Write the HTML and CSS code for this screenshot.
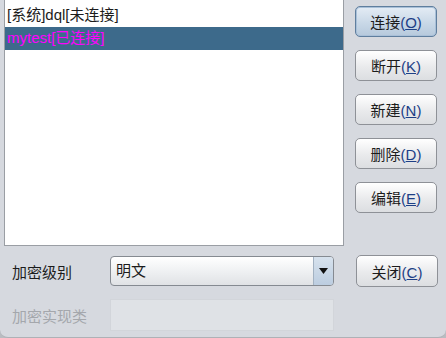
FILE: index.html
```html
<!DOCTYPE html>
<html lang="zh-CN">
<head>
    <meta charset="UTF-8">
    <title>连接管理</title>
    <link rel="stylesheet" href="styles.css">
</head>
<body>

    <div class="window">
        <div class="top">
            <!-- Connection list -->
            <div class="list">
                <div class="list-item">[系统]dql[未连接]</div>
                <div class="list-item selected">mytest[已连接]</div>
            </div>

            <!-- Action buttons -->
            <div class="buttons">
                <button class="button default">连接<span class="key">(<u>O</u>)</span></button>
                <button class="button">断开<span class="key">(<u>K</u>)</span></button>
                <button class="button">新建<span class="key">(<u>N</u>)</span></button>
                <button class="button">删除<span class="key">(<u>D</u>)</span></button>
                <button class="button">编辑<span class="key">(<u>E</u>)</span></button>
            </div>
        </div>

        <!-- Encryption settings -->
        <div class="form">
            <span class="label">加密级别</span>
            <div class="combo">
                <span class="combo-text">明文</span>
                <span class="combo-arrow">
                    <svg width="9" height="6" viewBox="0 0 9 6"><path d="M0 0 H9 L4.5 6 Z" fill="#111"/></svg>
                </span>
            </div>
            <button class="button close-btn">关闭<span class="key">(<u>C</u>)</span></button>

            <span class="label disabled">加密实现类</span>
            <div class="field"></div>
        </div>
    </div>

</body>
</html>
```

FILE: styles.css
```css
body {
    margin: 0;
    background-color: #b9bcc1;
    font-family: "Liberation Sans", "Noto Sans CJK SC", "Noto Sans CJK JP", sans-serif;
    font-size: 15px;
    color: #1c1c1c;
}
.window {
    width: 446px;
    height: 338px;
    box-sizing: border-box;
    background-color: #d6d9df;
    border-bottom: 1px solid #aeb1b6;
    border-radius: 0 0 8px 8px;
    overflow: hidden;
}
.top {
    display: flex;
    height: 246px;
}
.list {
    width: 340px;
    margin-left: 4px;
    box-sizing: border-box;
    padding-top: 4px;
    background-color: #ffffff;
    border: 1px solid #9a9ea4;
    border-top: none;
}
.list-item {
    height: 23px;
    line-height: 22px;
    padding-left: 2px;
}
.list-item.selected {
    background-color: #3d6a8b;
    color: #ff00ff;
}
.buttons {
    display: flex;
    flex-direction: column;
    gap: 13px;
    margin-left: 11px;
    padding-top: 6px;
}
.button {
    width: 82px;
    height: 31px;
    padding: 0;
    border: 1px solid #8e9197;
    border-radius: 5px;
    background: linear-gradient(#ffffff, #e9eaec 55%, #dcdee1);
    font-family: inherit;
    font-size: 15px;
    color: #1c1c1c;
}
.button.default {
    border-color: #5f7e9e;
    background: linear-gradient(#e4ecf5, #c9d8e7 55%, #b6c9dc);
    box-shadow: inset 0 0 0 1px #a9c0d8;
}
.key {
    color: #1d3f86;
}
.form {
    display: grid;
    grid-template-columns: 98px 224px auto;
    row-gap: 12px;
    align-items: center;
    padding-left: 12px;
    margin-top: 9px;
}
.close-btn {
    margin-left: 22px;
    height: 32px;
}
.label {
    font-size: 15px;
}
.label.disabled {
    color: #a4a7ac;
}
.combo {
    display: flex;
    height: 30px;
    box-sizing: border-box;
    border: 1px solid #858a91;
    border-radius: 4px;
    background: linear-gradient(#ffffff, #eceef0 60%, #e0e2e5);
    overflow: hidden;
}
.combo-text {
    flex: 1;
    line-height: 28px;
    padding-left: 5px;
}
.combo-arrow {
    display: flex;
    align-items: center;
    justify-content: center;
    width: 19px;
    border-left: 1px solid #a3b2c2;
    background: linear-gradient(#d7e2ed, #bccde0);
}
.field {
    height: 32px;
    box-sizing: border-box;
    background-color: #dfe2e6;
    border: 1px solid #d2d5da;
}
```
